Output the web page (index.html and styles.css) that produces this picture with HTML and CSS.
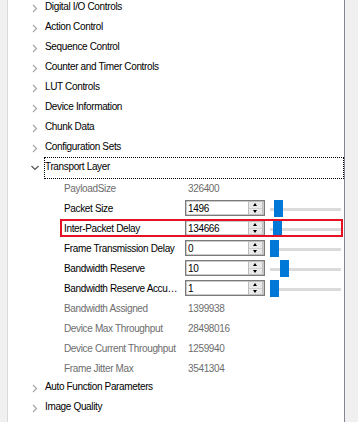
FILE: index.html
```
<!DOCTYPE html>
<html>
	<head>
		<meta charset="UTF-8">
		<title>Features</title>
		<link rel="stylesheet" href="styles.css">
	</head>
	<body>
		<!--属性树面板-->
		<div class="panel">
			<ul class="tree">
				<li class="node"><svg class="arrow" width="6" height="9" viewBox="0 0 6 9"><polyline points="1,1 4.5,4.5 1,8" /></svg><span class="name">Digital I/O Controls</span></li>
				<li class="node"><svg class="arrow" width="6" height="9" viewBox="0 0 6 9"><polyline points="1,1 4.5,4.5 1,8" /></svg><span class="name">Action Control</span></li>
				<li class="node"><svg class="arrow" width="6" height="9" viewBox="0 0 6 9"><polyline points="1,1 4.5,4.5 1,8" /></svg><span class="name">Sequence Control</span></li>
				<li class="node"><svg class="arrow" width="6" height="9" viewBox="0 0 6 9"><polyline points="1,1 4.5,4.5 1,8" /></svg><span class="name">Counter and Timer Controls</span></li>
				<li class="node"><svg class="arrow" width="6" height="9" viewBox="0 0 6 9"><polyline points="1,1 4.5,4.5 1,8" /></svg><span class="name">LUT Controls</span></li>
				<li class="node"><svg class="arrow" width="6" height="9" viewBox="0 0 6 9"><polyline points="1,1 4.5,4.5 1,8" /></svg><span class="name">Device Information</span></li>
				<li class="node"><svg class="arrow" width="6" height="9" viewBox="0 0 6 9"><polyline points="1,1 4.5,4.5 1,8" /></svg><span class="name">Chunk Data</span></li>
				<li class="node"><svg class="arrow" width="6" height="9" viewBox="0 0 6 9"><polyline points="1,1 4.5,4.5 1,8" /></svg><span class="name">Configuration Sets</span></li>
				<li class="node open"><svg class="arrow down" width="8" height="6" viewBox="0 0 8 6"><polyline points="0.5,1 4,4.5 7.5,1" /></svg><span class="name focus">Transport Layer</span></li>

				<li class="leaf"><div class="cell"><span class="label ro">PayloadSize</span><span class="val">326400</span></div></li>
				<li class="leaf">
					<div class="cell">
						<span class="label">Packet Size</span>
						<div class="spin"><span class="num">1496</span><span class="btns"><i class="up"></i><i class="dn"></i></span></div>
						<div class="slider"><span class="thumb" style="margin-left:4px"></span></div>
					</div>
				</li>
				<li class="leaf">
					<div class="cell hl">
						<span class="label">Inter-Packet Delay</span>
						<div class="spin"><span class="num">134666</span><span class="btns"><i class="up"></i><i class="dn"></i></span></div>
						<div class="slider"><span class="thumb" style="margin-left:3px"></span></div>
					</div>
				</li>
				<li class="leaf">
					<div class="cell">
						<span class="label">Frame Transmission Delay</span>
						<div class="spin"><span class="num">0</span><span class="btns"><i class="up"></i><i class="dn"></i></span></div>
						<div class="slider"><span class="thumb" style="margin-left:0px"></span></div>
					</div>
				</li>
				<li class="leaf">
					<div class="cell">
						<span class="label">Bandwidth Reserve</span>
						<div class="spin"><span class="num">10</span><span class="btns"><i class="up"></i><i class="dn"></i></span></div>
						<div class="slider"><span class="thumb" style="margin-left:10px"></span></div>
					</div>
				</li>
				<li class="leaf">
					<div class="cell">
						<span class="label">Bandwidth Reserve Accumulation</span>
						<div class="spin"><span class="num">1</span><span class="btns"><i class="up"></i><i class="dn"></i></span></div>
						<div class="slider"><span class="thumb" style="margin-left:0px"></span></div>
					</div>
				</li>
				<li class="leaf"><div class="cell"><span class="label ro">Bandwidth Assigned</span><span class="val">1399938</span></div></li>
				<li class="leaf"><div class="cell"><span class="label ro">Device Max Throughput</span><span class="val">28498016</span></div></li>
				<li class="leaf"><div class="cell"><span class="label ro">Device Current Throughput</span><span class="val">1259940</span></div></li>
				<li class="leaf"><div class="cell"><span class="label ro">Frame Jitter Max</span><span class="val">3541304</span></div></li>

				<li class="node"><svg class="arrow" width="6" height="9" viewBox="0 0 6 9"><polyline points="1,1 4.5,4.5 1,8" /></svg><span class="name">Auto Function Parameters</span></li>
				<li class="node"><svg class="arrow" width="6" height="9" viewBox="0 0 6 9"><polyline points="1,1 4.5,4.5 1,8" /></svg><span class="name">Image Quality</span></li>
			</ul>
		</div>
	</body>
</html>
```
FILE: styles.css
```
* {
	margin: 0;
	padding: 0;
}

html,
body {
	height: 100%;
}

body {
	background: #f0f0f0;
	font-family: "Liberation Sans", Arial, sans-serif;
	font-size: 10px;
	letter-spacing: -0.35px;
	color: #000;
	overflow: hidden;
}

.panel {
	width: 336px;
	height: 100%;
	margin-left: 7px;
	background: #fff;
	border-left: 1px solid #dadada;
	border-right: 1px solid #828790;
	overflow: hidden;
}

.tree {
	list-style: none;
	margin-top: -2px;
}

.tree li {
	height: 20px;
	display: flex;
	align-items: center;
}

.node {
	padding-left: 24px;
}

.arrow {
	flex: none;
	fill: none;
	stroke: #a6a6a6;
	stroke-width: 1.2;
	margin-right: 7px;
}

.arrow.down {
	stroke: #555;
	margin-left: -1px;
	margin-right: 5px;
}

.name {
	flex: 1;
	height: 20px;
	line-height: 18px;
	border: 1px solid transparent;
	border-left: 0;
	border-right: 0;
}

.name.focus {
	border: 1px dotted #000;
}

/*子节点*/
.cell {
	margin-left: 53px;
	width: 281px;
	height: 16px;
	display: flex;
	align-items: center;
}

.cell.hl {
	outline: 2px solid #e81123;
	outline-offset: -1px;
}

.label {
	width: 121px;
	padding-left: 3px;
	white-space: nowrap;
	overflow: hidden;
	text-overflow: ellipsis;
	flex: none;
}

.label.ro,
.val {
	color: #6d6d6d;
}

.val {
	padding-left: 3px;
}

.spin {
	width: 80px;
	height: 16px;
	box-sizing: border-box;
	border: 1px solid #7a7a7a;
	box-shadow: inset 0 0 0 0.5px #9a9a9a;
	display: flex;
	align-items: center;
	flex: none;
}

.num {
	flex: 1;
	padding-left: 2px;
}

.btns {
	width: 13px;
	height: 12px;
	margin-right: 1px;
	display: flex;
	flex-direction: column;
	border: 1px solid #bdbdbd;
	background: #e9e9e9;
}

.btns i {
	flex: 1;
	position: relative;
}

.btns i::after {
	content: "";
	position: absolute;
	left: 4px;
	top: 1px;
	border-left: 2.5px solid transparent;
	border-right: 2.5px solid transparent;
}

.btns .up::after {
	border-bottom: 3px solid #000;
}

.btns .dn::after {
	border-top: 3px solid #000;
}

.btns .up {
	border-bottom: 1px solid #d0d0d0;
}

.slider {
	width: 71px;
	height: 17px;
	margin-left: 5px;
	display: flex;
	align-items: center;
	background: linear-gradient(#dbdbdb, #dbdbdb) no-repeat 0 8px / 100% 3px;
}

.thumb {
	display: block;
	width: 9px;
	height: 17px;
	background: #0078d7;
}
```
